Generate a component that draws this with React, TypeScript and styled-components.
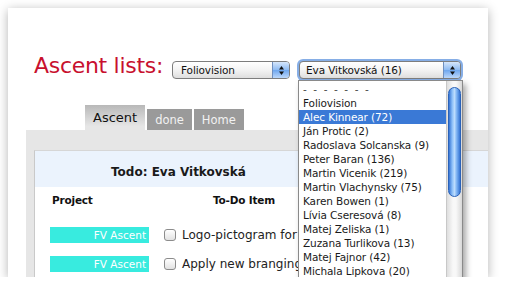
import React from 'react';
import styled, { createGlobalStyle } from 'styled-components';

const GlobalStyle = createGlobalStyle`
  body {
    margin: 0;
    background: #fff;
    font-family: "DejaVu Sans", Verdana, sans-serif;
    color: #111;
  }
`;

const people = [
  '- - - - - - -',
  'Foliovision',
  'Alec Kinnear (72)',
  'Ján Protic (2)',
  'Radoslava Solcanska (9)',
  'Peter Baran (136)',
  'Martin Vicenik (219)',
  'Martin Vlachynsky (75)',
  'Karen Bowen (1)',
  'Lívia Cseresová (8)',
  'Matej Zeliska (1)',
  'Zuzana Turlikova (13)',
  'Matej Fajnor (42)',
  'Michala Lipkova (20)',
];

const todos = ['Logo-pictogram for the new site', 'Apply new branging to the forum'];

const Card = styled.div`
  margin: 8px 0 0 8px;
  width: 480px;
  height: 269px;
  background: #fff;
  box-shadow: 0 2px 10px rgba(0, 0, 0, 0.3);
  overflow: hidden;
  display: flex;
  flex-direction: column;
  padding-left: 18px;
  box-sizing: border-box;
`;

const TitleRow = styled.div`
  display: flex;
  align-items: flex-start;
  margin-top: 46px;
  padding-left: 8px;
`;

const Title = styled.h1`
  margin: 0;
  font-size: 22px;
  font-weight: normal;
  line-height: 24px;
  letter-spacing: -0.3px;
  color: #c8102e;
`;

const SelectSlot = styled.div`
  margin: 7px 0 0 9px;
`;

const FocusRing = styled.div`
  position: relative;
  margin: 5px 0 0 7px;
  padding: 2px;
  border-radius: 6px;
  background: #86aee6;
`;

const Select = styled.div<{ $width: number }>`
  width: ${({ $width }) => $width}px;
  height: 18px;
  box-sizing: border-box;
  display: flex;
  border: 1px solid #7d7d7d;
  border-radius: 4px;
  background: linear-gradient(#ffffff, #f3f3f3 50%, #dedede);
  font-size: 10.5px;
  letter-spacing: -0.1px;
`;

const SelectLabel = styled.span<{ $pad: number }>`
  flex: 1;
  line-height: 16px;
  padding-left: ${({ $pad }) => $pad}px;
  color: #111;
`;

const SelectArrow = styled.span`
  width: 16px;
  border-left: 1px solid #6f8fbf;
  border-radius: 0 3px 3px 0;
  background: linear-gradient(#d6e6fb, #8dbaf2 50%, #6ea6ee 51%, #bcd8fb);
  display: flex;
  align-items: center;
  justify-content: center;
`;

const Dropdown = styled.div`
  position: absolute;
  top: 21px;
  left: 1px;
  width: 165px;
  height: 210px;
  box-sizing: border-box;
  display: flex;
  background: #fff;
  border: 1px solid #8a8a8a;
  box-shadow: 3px 4px 6px rgba(0, 0, 0, 0.35);
  z-index: 5;
`;

const Options = styled.ul`
  flex: 1;
  margin: 0;
  padding: 1px 0 0;
  list-style: none;
  overflow: hidden;
`;

const Option = styled.li<{ $selected?: boolean; $sep?: boolean }>`
  line-height: 14px;
  height: 14px;
  padding-left: 4px;
  font-size: 10.5px;
  letter-spacing: ${({ $sep }) => ($sep ? '1.6px' : '-0.1px')};
  white-space: nowrap;
  color: ${({ $selected, $sep }) => ($selected ? '#fff' : $sep ? '#444' : '#1a1a1a')};
  background: ${({ $selected }) => ($selected ? '#3a79d6' : 'transparent')};
`;

const ScrollTrack = styled.div`
  width: 15px;
  border-left: 1px solid #c8c8c8;
  background: linear-gradient(to right, #dedede, #f8f8f8 40%, #f8f8f8 60%, #d8d8d8);
`;

const ScrollThumb = styled.div`
  margin: 6px 1px 0;
  height: 110px;
  box-sizing: border-box;
  border: 1px solid #2a62b8;
  border-radius: 7px;
  background: linear-gradient(to right, #3574d4, #8ec0f8 30%, #bcdcfd 50%, #7db2f2 70%, #3574d4);
`;

const TabRow = styled.div`
  display: flex;
  align-items: flex-end;
  gap: 2px;
  height: 25px;
  margin: 24px 0 0 59px;
`;

const Tab = styled.div<{ $active?: boolean }>`
  height: ${({ $active }) => ($active ? 25 : 21)}px;
  line-height: ${({ $active }) => ($active ? 26 : 22)}px;
  padding: 0 8px;
  font-size: ${({ $active }) => ($active ? 13 : 11.5)}px;
  color: ${({ $active }) => ($active ? '#111' : '#f2f2f2')};
  background: ${({ $active }) =>
    $active ? 'linear-gradient(#b8b8b8, #e6e6e6 85%)' : '#9a9a9a'};
`;

const Panel = styled.div`
  flex: 1;
  display: flex;
  background: #e6e6e6;
  padding: 20px 0 0 8px;
`;

const Box = styled.div`
  flex: 1;
  background: #fff;
  border-left: 1px solid #c9c9c9;
  border-top: 1px solid #d6d6d6;
`;

const BoxHeader = styled.div`
  height: 36px;
  display: flex;
  align-items: center;
  padding: 5px 0 0 76px;
  box-sizing: border-box;
  background: #ebf3fd;
  font-size: 12px;
  font-weight: bold;
  color: #1a1a1a;
`;

const ColumnHeads = styled.div`
  display: grid;
  grid-template-columns: 161px auto;
  height: 24px;
  align-items: center;
  padding: 1px 0 0 17px;
  font-size: 10.5px;
  font-weight: bold;
  letter-spacing: -0.2px;
`;

const Rows = styled.div`
  display: flex;
  flex-direction: column;
  gap: 13px;
  padding: 15px 0 0 15px;
`;

const Row = styled.div`
  display: flex;
  align-items: center;
  height: 16px;
`;

const Badge = styled.span`
  width: 99px;
  height: 16px;
  line-height: 16px;
  padding-right: 3px;
  box-sizing: border-box;
  text-align: right;
  background: #38ebdf;
  color: #fff;
  font-size: 10.5px;
`;

const Check = styled.span`
  width: 12px;
  height: 12px;
  margin-left: 15px;
  box-sizing: border-box;
  border: 1px solid #8c8c8c;
  border-radius: 3px;
  background: linear-gradient(#ffffff, #e2e2e2);
`;

const ItemText = styled.span`
  margin-left: 6px;
  font-size: 12px;
  color: #222;
  white-space: nowrap;
`;

const Arrows = () => (
  <svg width="7" height="11" viewBox="0 0 7 11">
    <path d="M3.5 1 L6 4.5 H1 Z" fill="#111" />
    <path d="M3.5 10 L6 6.5 H1 Z" fill="#111" />
  </svg>
);

export default function App() {
  return (
    <>
      <GlobalStyle />
      <Card>
        <TitleRow>
          <Title>Ascent lists:</Title>
          <SelectSlot>
            <Select $width={118}>
              <SelectLabel $pad={8}>Foliovision</SelectLabel>
              <SelectArrow>
                <Arrows />
              </SelectArrow>
            </Select>
          </SelectSlot>
          <FocusRing>
            <Select $width={162}>
              <SelectLabel $pad={6}>Eva Vitkovská (16)</SelectLabel>
              <SelectArrow>
                <Arrows />
              </SelectArrow>
            </Select>
            <Dropdown>
              <Options>
                {people.map((p, i) => (
                  <Option key={p} $selected={i === 2} $sep={i === 0}>
                    {p}
                  </Option>
                ))}
              </Options>
              <ScrollTrack>
                <ScrollThumb />
              </ScrollTrack>
            </Dropdown>
          </FocusRing>
        </TitleRow>

        <TabRow>
          <Tab $active>Ascent</Tab>
          <Tab>done</Tab>
          <Tab>Home</Tab>
        </TabRow>

        <Panel>
          <Box>
            <BoxHeader>Todo: Eva Vitkovská</BoxHeader>
            <ColumnHeads>
              <span>Project</span>
              <span>To-Do Item</span>
            </ColumnHeads>
            <Rows>
              {todos.map((t) => (
                <Row key={t}>
                  <Badge>FV Ascent</Badge>
                  <Check />
                  <ItemText>{t}</ItemText>
                </Row>
              ))}
            </Rows>
          </Box>
        </Panel>
      </Card>
    </>
  );
}
